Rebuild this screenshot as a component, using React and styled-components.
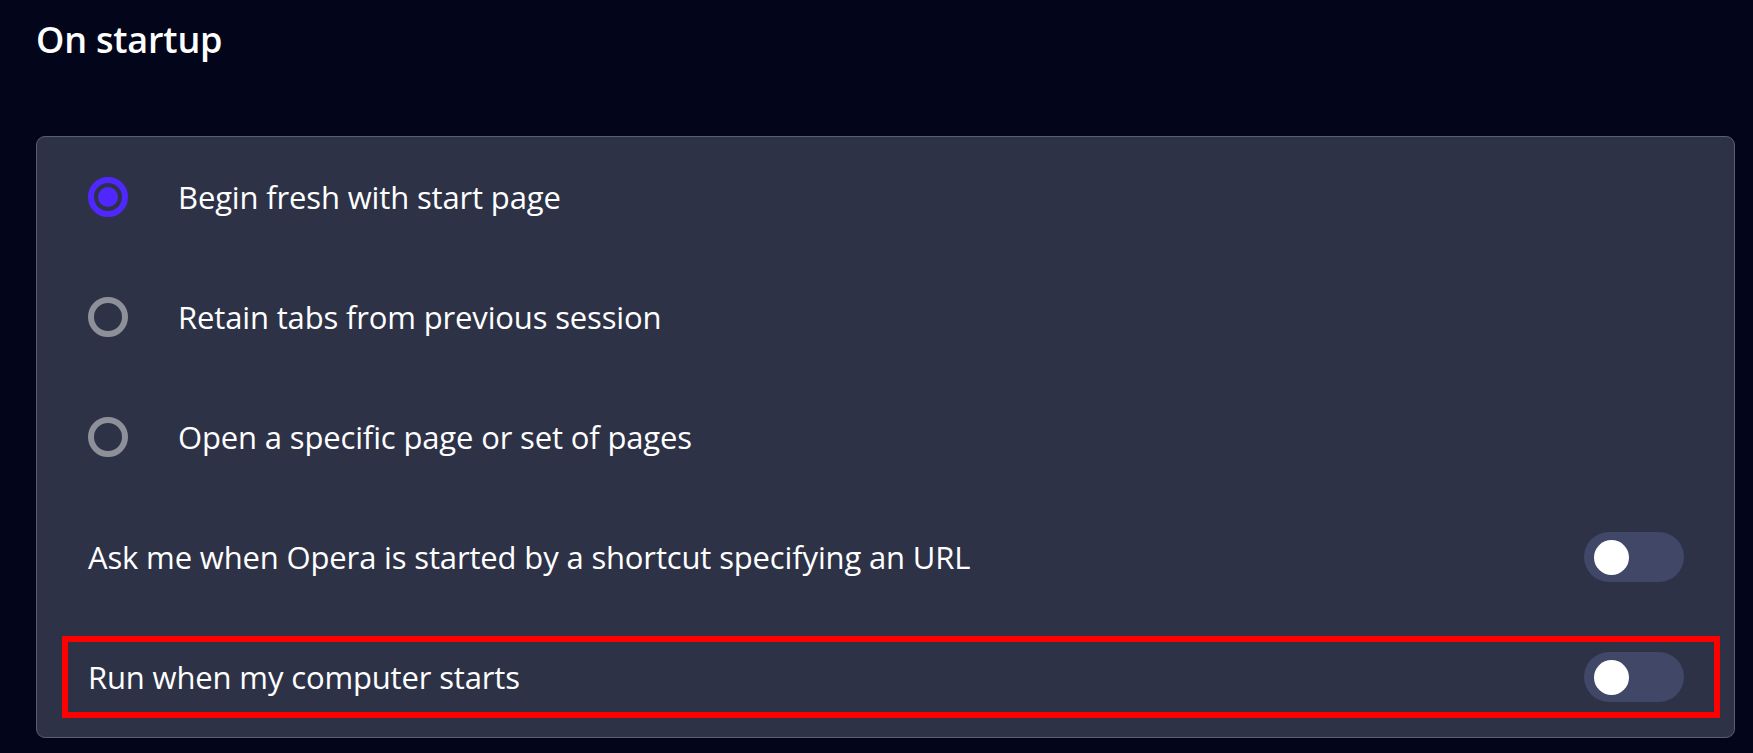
import React from "react";
import styled, { createGlobalStyle } from "styled-components";

const Global = createGlobalStyle`
  html, body { margin: 0; padding: 0; background: #03061a; }
  body { font-family: "Open Sans", "Noto Sans", sans-serif; color: #ffffff; }
`;

const Page = styled.div`
  padding: 14px 18px 0 36px;
  min-height: 753px;
  box-sizing: border-box;
  background: #03061a;
`;

const Title = styled.h2`
  margin: 0;
  font-size: 36px;
  font-weight: 600;
  line-height: 52px;
  height: 122px;
  color: #ffffff;
  letter-spacing: -0.2px;
`;

const Card = styled.div`
  background: #2e3247;
  border: 1px solid #5b5e72;
  border-radius: 9px;
  display: flex;
  flex-direction: column;
`;

const Row = styled.div`
  position: relative;
  height: 120px;
  display: flex;
  align-items: center;
  padding: 0 50px 0 51px;
  gap: ${(p) => (p.$radio ? "50px" : "24px")};
  justify-content: ${(p) => (p.$radio ? "flex-start" : "space-between")};
`;

const Label = styled.span`
  font-size: 31px;
  color: #ffffff;
  letter-spacing: -0.15px;
`;

const RadioCircle = styled.span`
  width: 40px;
  height: 40px;
  border-radius: 50%;
  box-sizing: border-box;
  border: 6px solid ${(p) => (p.$checked ? "#5028ff" : "#8e9099")};
  display: flex;
  align-items: center;
  justify-content: center;
  flex-shrink: 0;
  &::after {
    content: "";
    width: 20px;
    height: 20px;
    border-radius: 50%;
    background: ${(p) => (p.$checked ? "#5028ff" : "transparent")};
  }
`;

const Track = styled.span`
  width: 100px;
  height: 50px;
  border-radius: 25px;
  background: #414766;
  display: flex;
  align-items: center;
  padding-left: 10px;
  box-sizing: border-box;
  flex-shrink: 0;
`;

const Knob = styled.span`
  width: 35px;
  height: 35px;
  border-radius: 50%;
  background: #ffffff;
`;

const Highlight = styled.div`
  position: absolute;
  left: 25px;
  right: 14px;
  top: 19px;
  bottom: 19px;
  border: 6px solid #ff0000;
  pointer-events: none;
`;

const radios = [
  { label: "Begin fresh with start page", checked: true },
  { label: "Retain tabs from previous session", checked: false },
  { label: "Open a specific page or set of pages", checked: false },
];

const toggles = [
  { label: "Ask me when Opera is started by a shortcut specifying an URL", highlight: false },
  { label: "Run when my computer starts", highlight: true },
];

export default function App() {
  return (
    <>
      <Global />
      <Page>
        <Title>On startup</Title>
        <Card>
          {radios.map((r) => (
            <Row $radio key={r.label}>
              <RadioCircle $checked={r.checked} />
              <Label>{r.label}</Label>
            </Row>
          ))}
          {toggles.map((t) => (
            <Row key={t.label}>
              <Label>{t.label}</Label>
              <Track>
                <Knob />
              </Track>
              {t.highlight && <Highlight />}
            </Row>
          ))}
        </Card>
      </Page>
    </>
  );
}
